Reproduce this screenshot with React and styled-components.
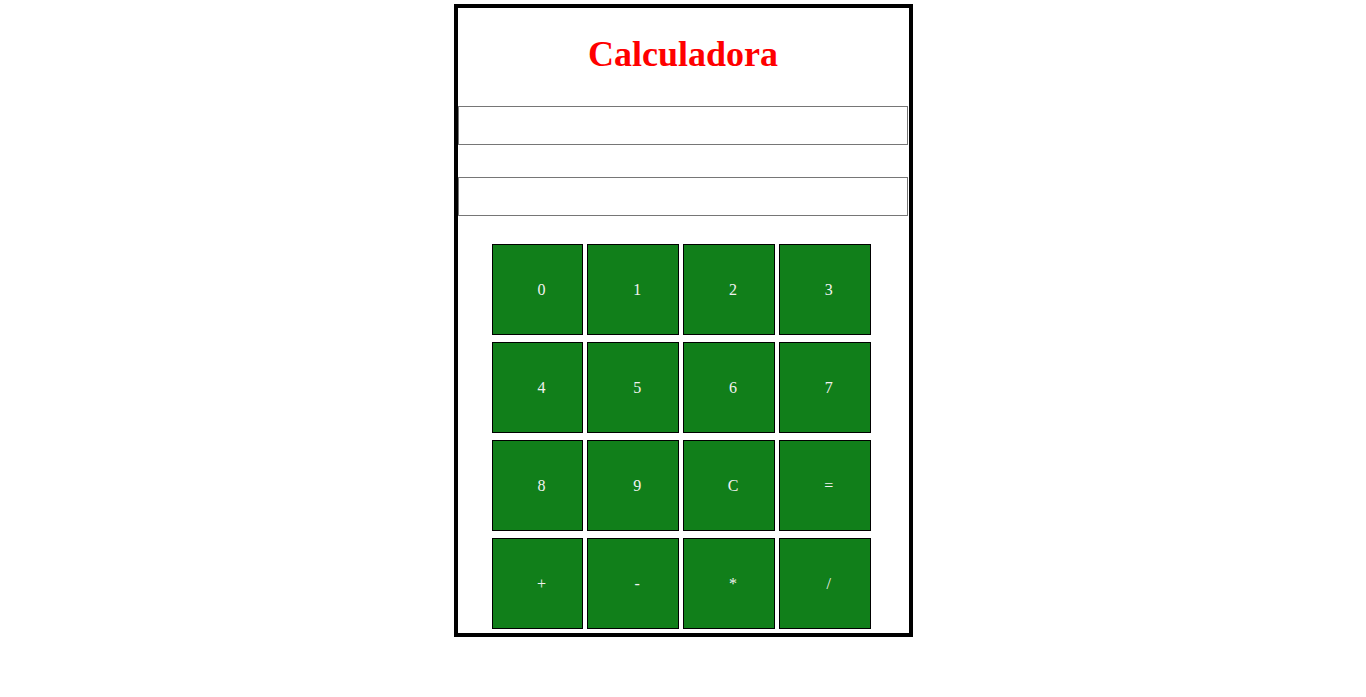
import styled, { createGlobalStyle } from "styled-components";

const GlobalStyle = createGlobalStyle`
  body {
    margin: 0;
    background: #fff;
    font-family: "Liberation Serif", "Times New Roman", serif;
  }
`;

const Calculator = styled.div`
  width: 451px;
  margin: 4px auto 0;
  border: 4px solid #000;
  background: #fff;
`;

const Title = styled.h1`
  margin: 25px 0 31px;
  font-size: 36px;
  font-weight: bold;
  color: #ff0000;
  text-align: center;
`;

const Display = styled.input`
  display: block;
  box-sizing: border-box;
  width: 450px;
  height: 39px;
  margin: 0 0 32px;
  border: 1px solid #767676;
  padding: 0 4px;
  font-family: inherit;
  font-size: 16px;
  &:last-of-type {
    margin-bottom: 28px;
  }
`;

const Keys = styled.div`
  display: grid;
  grid-template-columns: repeat(4, 91.8px);
  grid-auto-rows: 91px;
  column-gap: 4px;
  row-gap: 7px;
  padding: 0 0 4px 34px;
`;

const Key = styled.button`
  box-sizing: border-box;
  border: 1px solid #000;
  background: #117f1a;
  color: #f2f2f2;
  font-family: "Liberation Serif", "Times New Roman", serif;
  font-size: 16px;
  padding: 0 0 0 8px;
  cursor: pointer;
`;

const keys = ["0", "1", "2", "3", "4", "5", "6", "7", "8", "9", "C", "=", "+", "-", "*", "/"];

export default function App() {
  return (
    <>
      <GlobalStyle />
      <Calculator>
        <Title>Calculadora</Title>
        <Display type="text" />
        <Display type="text" />
        <Keys>
          {keys.map((k) => (
            <Key key={k}>{k}</Key>
          ))}
        </Keys>
      </Calculator>
    </>
  );
}
